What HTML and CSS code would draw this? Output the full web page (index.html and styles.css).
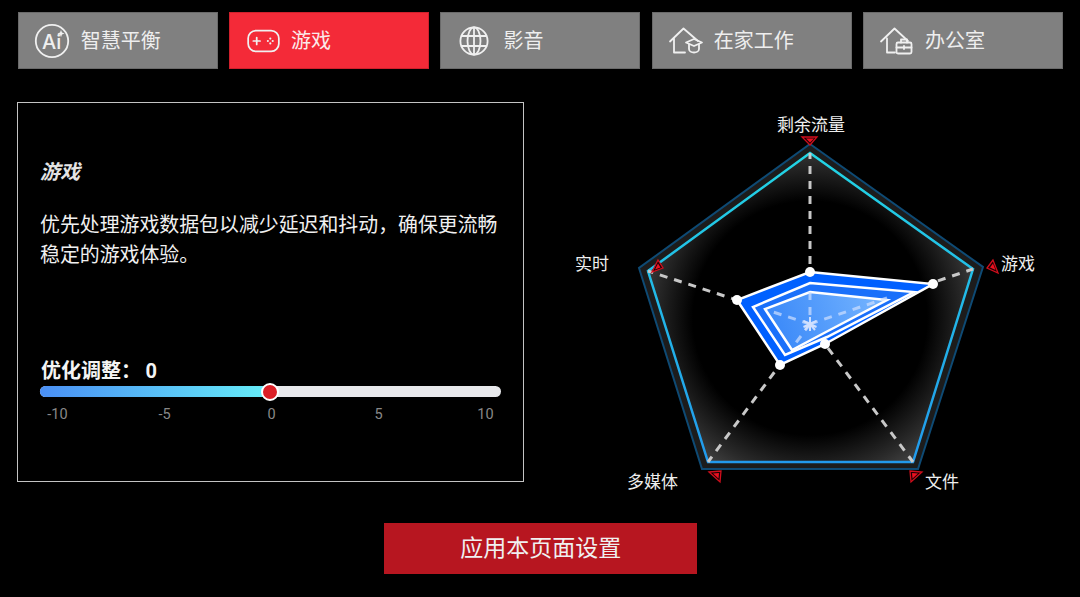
FILE: index.html
```html
<!DOCTYPE html>
<html lang="zh-CN">

<head>
    <meta charset="UTF-8">
    <meta name="viewport" content="width=device-width, initial-scale=1.0">
    <title>游戏</title>

    <link rel="stylesheet" href="styles.css">
</head>

<body>
    <div class="page">
        <ul class="tabs">
            <li class="tab">
                <svg class="icon" width="36" height="36" viewBox="0 0 36 36">
                    <circle cx="18" cy="18" r="16.2"/>
                    <text class="icon-text" x="8" y="26">Ai</text>
                    <path class="icon-fill" d="M27 7l1 2.6 2.6 1-2.6 1-1 2.6-1-2.6-2.6-1 2.6-1z"/>
                </svg>
                <span>智慧平衡</span>
            </li>
            <li class="tab active">
                <svg class="icon" width="33" height="24" viewBox="0 0 34 24">
                    <rect x="1.2" y="1.2" width="31.6" height="21.6" rx="8"/>
                    <path d="M6.5 12h7M10 8.5v7"/>
                    <circle class="icon-fill" cx="24" cy="9.5" r="1.1"/>
                    <circle class="icon-fill" cx="24" cy="14.5" r="1.1"/>
                    <circle class="icon-fill" cx="21.5" cy="12" r="1.1"/>
                    <circle class="icon-fill" cx="26.5" cy="12" r="1.1"/>
                </svg>
                <span>游戏</span>
            </li>
            <li class="tab">
                <svg class="icon" width="36" height="30" viewBox="-3 0 36 30">
                    <circle cx="15" cy="15" r="13.6"/>
                    <ellipse cx="15" cy="15" rx="6.5" ry="13.6"/>
                    <path d="M15 1.4v27.2M2.6 10h24.8M2.6 20h24.8"/>
                </svg>
                <span>影音</span>
            </li>
            <li class="tab">
                <svg class="icon icon-house" width="36" height="28" viewBox="-1 0 36 28">
                    <path d="M1 14.5L14.5 1.5 29 14M5 11.5V25.5H16"/>
                    <path d="M17 15.5l8-3.5 8 3.5-8 3.5z"/>
                    <path d="M20 17.5v4.5c0 2 2.500 3.500 5 3.500s5-1.500 5-3.500v-4.500"/>
                </svg>
                <span>在家工作</span>
            </li>
            <li class="tab">
                <svg class="icon icon-house" width="36" height="28" viewBox="-1 0 36 28">
                    <path d="M1 14.500L14.500 1.500 28 14M7 11.500V25.500H15"/>
                    <rect x="16.500" y="15.500" width="15" height="11" rx="1.500"/>
                    <path d="M21 15.500v-3h6v3M16.500 20.500h15M24 19v3"/>
                </svg>
                <span>办公室</span>
            </li>
        </ul>

        <div class="main">
            <div class="panel">
                <h2 class="panel-title">游戏</h2>
                <p class="panel-desc">优先处理游戏数据包以减少延迟和抖动，确保更流畅稳定的游戏体验。</p>

                <div class="tune">
                    <div class="tune-label">优化调整： <span class="tune-value">0</span></div>
                    <div class="slider">
                        <div class="slider-fill"></div>
                        <div class="slider-thumb"></div>
                    </div>
                    <div class="ticks">
                        <span>-10</span>
                        <span>-5</span>
                        <span>0</span>
                        <span>5</span>
                        <span>10</span>
                    </div>
                </div>
            </div>

            <!-- viewBox uses the same numbers as the screen so points are easy to read off -->
            <svg class="radar" width="520" height="400" viewBox="540 100 520 400">
                <defs>
                    <radialGradient id="glow" gradientUnits="userSpaceOnUse" cx="810" cy="318" r="195">
                        <stop offset="0.6" stop-color="#000"/>
                        <stop offset="0.8" stop-color="#2a2a2a"/>
                        <stop offset="1" stop-color="#5a5a5a"/>
                    </radialGradient>
                    <linearGradient id="edge" gradientUnits="userSpaceOnUse" x1="810" y1="150" x2="810" y2="465">
                        <stop offset="0" stop-color="#22d6e4"/>
                        <stop offset="1" stop-color="#2299ec"/>
                    </linearGradient>
                    <linearGradient id="core" gradientUnits="userSpaceOnUse" x1="765" y1="340" x2="890" y2="295">
                        <stop offset="0" stop-color="#3585f8"/>
                        <stop offset="1" stop-color="#7ab8ff"/>
                    </linearGradient>
                </defs>

                <polygon class="radar-outer" points="810,144 983,267 918,469 702,469 639,268"/>
                <polygon class="radar-inner" points="810,153 973,269 913,462 708,462 648,271"/>

                <g class="radar-axes">
                    <line x1="810" y1="324" x2="810" y2="153"/>
                    <line x1="810" y1="324" x2="973" y2="269"/>
                    <line x1="810" y1="324" x2="913" y2="462"/>
                    <line x1="810" y1="324" x2="708" y2="462"/>
                    <line x1="810" y1="324" x2="648" y2="271"/>
                </g>

                <polygon class="data-band" points="810,272 933,284 825,344 780,365 737,300"/>
                <polygon class="data-mid" points="810,283 914,292 827,337 785,355 753,307"/>
                <polygon class="data-core" points="810,292 887,300 826,332 792,350 765,309"/>
                <polygon class="data-line" points="810,272 933,284 825,344 780,365 737,300"/>

                <g class="radar-axes on-data">
                    <line x1="810" y1="292" x2="810" y2="324"/>
                    <line x1="810" y1="324" x2="887" y2="298"/>
                    <line x1="810" y1="324" x2="795" y2="344"/>
                    <line x1="810" y1="324" x2="770" y2="311"/>
                </g>
                <path class="radar-star" d="M810 317v14M803.500 321l13 6M816.500 321l-13 6M805 330l5-6 5 6"/>

                <circle class="data-dot" cx="810" cy="272" r="5"/>
                <circle class="data-dot" cx="933" cy="284" r="5"/>
                <circle class="data-dot" cx="825" cy="344" r="5"/>
                <circle class="data-dot" cx="780" cy="365" r="5"/>
                <circle class="data-dot" cx="737" cy="300" r="5"/>

                <polygon class="mark" points="802,137 817,137 810,145"/>
                <polygon class="mark-in" points="806,138.500 814,138.500 810,142.500"/>
                <polygon class="mark" points="993,260 987,268 998,273"/>
                <polygon class="mark-in" points="993,263.500 990,267.500 995.500,270"/>
                <polygon class="mark" points="658,260 652,272 663,268"/>
                <polygon class="mark-in" points="658,263.500 655,269.500 660.500,267.500"/>
                <polygon class="mark" points="709,472 721,471 720,482"/>
                <polygon class="mark-in" points="713,473.500 719,473 718.500,478.500"/>
                <polygon class="mark" points="910,471 922,472 911,482"/>
                <polygon class="mark-in" points="912,473 918,473.500 912.500,478.500"/>

                <text class="radar-label" x="811" y="131" text-anchor="middle">剩余流量</text>
                <text class="radar-label" x="1001" y="270">游戏</text>
                <text class="radar-label" x="575" y="270">实时</text>
                <text class="radar-label" x="627" y="488">多媒体</text>
                <text class="radar-label" x="925" y="488">文件</text>
            </svg>
        </div>

        <button class="apply">应用本页面设置</button>
    </div>
</body>

</html>
```

FILE: styles.css
```css
* {
    padding: 0;
    margin: 0;
    box-sizing: border-box;
}

html,
body {
    height: 100%;
    background: #000;
    overflow: hidden;
}

body {
    font-family: "Noto Sans CJK SC", "Liberation Sans", sans-serif;
    color: #f0f0f0;
}

.page {
    padding: 12px 17.200px 0 17.800px;
}

.tabs {
    display: grid;
    grid-template-columns: repeat(5, 1fr);
    column-gap: 11.500px;
    list-style: none;
}

.tab {
    height: 57px;
    display: flex;
    align-items: center;
    gap: 11px;
    padding-left: 15px;
    background: #808080;
    border: 1px solid #6a6a6a;
    color: #eee;
    font-size: 20px;
}

.tab span {
    padding-bottom: 2px;
}

.tab.active {
    background: #f42a38;
    border-color: #d0202c;
    padding-left: 17px;
    color: #fbeaea;
}

.icon {
    flex: none;
}

.icon-house {
    margin-right: -1px;
}

.icon * {
    fill: none;
    stroke: #f0f0f0;
    stroke-width: 1.800;
    stroke-linecap: round;
    stroke-linejoin: round;
}

.icon .icon-fill {
    fill: #f0f0f0;
    stroke: none;
}

.icon .icon-text {
    fill: #f0f0f0;
    stroke: none;
    font-family: "Inter", "Liberation Sans", sans-serif;
    font-size: 20px;
    font-weight: 500;
}

.main {
    display: flex;
    height: 380px;
    margin-top: 33px;
    margin-left: -0.800px;
}

.panel {
    flex: none;
    width: 507px;
    height: 380px;
    padding: 54px 20px 0 22px;
    border: 1px solid #c4c4c4;
}

.panel-title {
    font-size: 20px;
    font-style: italic;
    font-weight: 700;
    line-height: 28px;
    color: #e4e4e4;
}

.panel-desc {
    margin-top: 24px;
    font-size: 19.900px;
    line-height: 30px;
    color: #f0f0f0;
}

.tune {
    margin-top: 88px;
}

.tune-label {
    padding-left: 1px;
    font-size: 20px;
    font-weight: 700;
    line-height: 26px;
    white-space: pre;
    color: #f4f4f4;
}

.tune-value {
    font-family: "Roboto", "Liberation Sans", sans-serif;
    font-size: 20px;
}

.slider {
    position: relative;
    height: 11px;
    width: 461px;
    margin-top: 2px;
    border-radius: 6px;
    background: #e8e9ec;
}

.slider-fill {
    width: 230px;
    height: 100%;
    border-radius: 6px 0 0 6px;
    background: linear-gradient(90deg, #4a8ff5, #66eef8);
}

.slider-thumb {
    position: absolute;
    left: 221px;
    top: -3.500px;
    width: 18px;
    height: 18px;
    border-radius: 50%;
    background: #dc1f26;
    border: 2px solid #fff;
}

.ticks {
    display: grid;
    grid-template-columns: repeat(5, 107px);
    margin-top: 9px;
    margin-left: -36px;
    text-align: center;
    font-family: "Roboto", "Liberation Sans", sans-serif;
    font-size: 14.500px;
    line-height: 18px;
    color: #888;
}

.radar {
    flex: none;
    margin-top: -2px;
    margin-left: 16px;
}

.radar-outer {
    fill: #1c1c1c;
    stroke: #0e4a74;
    stroke-width: 2;
}

.radar-inner {
    fill: url(#glow);
    stroke: url(#edge);
    stroke-width: 2.500;
}

.radar-axes line {
    stroke: #c8c8c8;
    stroke-width: 3;
    stroke-dasharray: 8 7;
}

.radar-axes.on-data line {
    stroke: #cfe0ff;
    opacity: 0.7;
}

.radar-star {
    fill: none;
    stroke: #cfe0ff;
    stroke-width: 2;
}

.data-band {
    fill: #0060ff;
}

.data-mid {
    fill: #1a70fa;
    stroke: #fff;
    stroke-width: 2.500;
}

.data-core {
    fill: url(#core);
    stroke: #fff;
    stroke-width: 2.500;
}

.data-line {
    fill: none;
    stroke: #fff;
    stroke-width: 2.500;
}

.data-dot {
    fill: #fff;
}

.mark {
    fill: #1a0004;
    stroke: #d00e1c;
    stroke-width: 1.300;
}

.mark-in {
    fill: #ec1020;
}

.radar-label {
    fill: #eee;
    font-size: 17px;
}

.apply {
    display: block;
    width: 313px;
    height: 51px;
    margin: 41px auto 0;
    padding-bottom: 6px;
    position: relative;
    left: 0.500px;
    border: none;
    background: #b71620;
    color: #f0f0f0;
    font-family: "Noto Sans CJK SC", "Liberation Sans", sans-serif;
    font-size: 23px;
}
```
